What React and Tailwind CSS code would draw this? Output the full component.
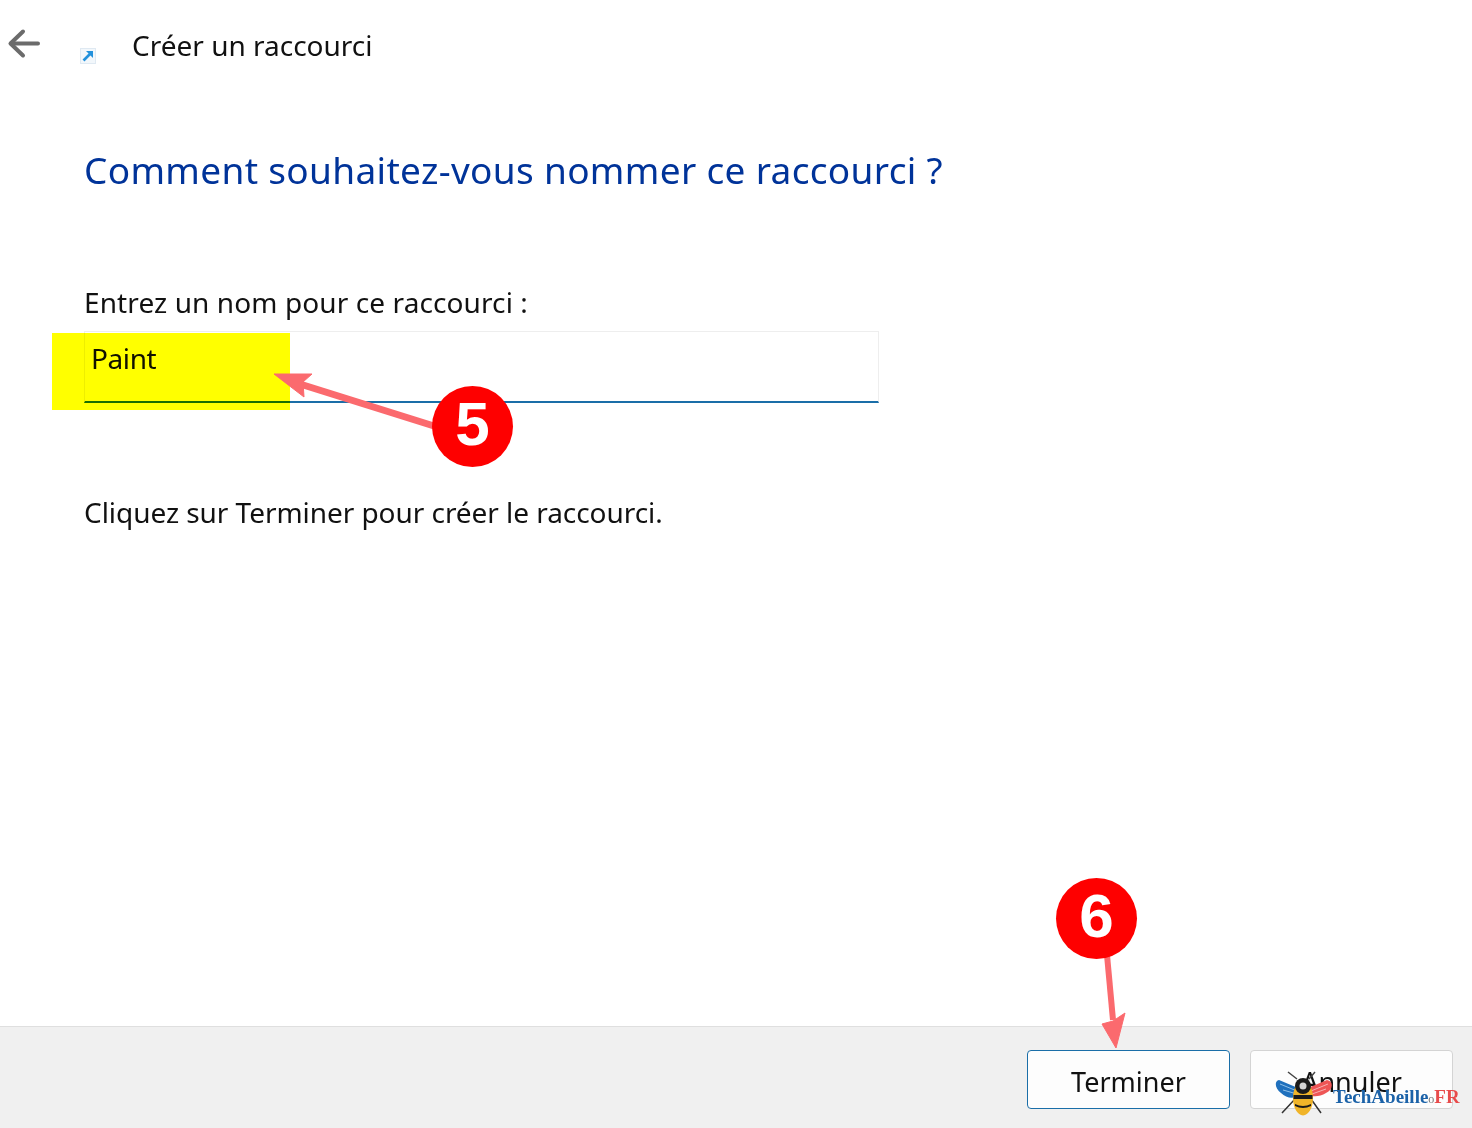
const uiFont = { fontFamily: '"Noto Sans", "Open Sans", sans-serif' };

function BackArrow() {
  return (
    <svg width="34" height="32" viewBox="0 0 34 32" fill="none" stroke="#6b6b6b" strokeWidth="4" strokeLinecap="round" strokeLinejoin="round">
      <path d="M31 15.500H4" />
      <path d="M16 3.500 3.500 15.500 16 27.500" />
    </svg>
  );
}

function ShortcutIcon() {
  return (
    <svg width="16" height="16" viewBox="0 0 16 16" fill="none">
      <rect x="0.500" y="0.500" width="15" height="15" fill="#f2f7fb" stroke="#dfe9f2" />
      <path d="M3.500 12.500 10.500 5.500" stroke="#2291dc" strokeWidth="2.600" />
      <path d="M6 3H13V10Z" fill="#2291dc" />
    </svg>
  );
}

function Badge({ number, className }) {
  return (
    <div
      className={`absolute flex h-[81px] w-[81px] items-center justify-center rounded-full bg-[#fe0000] pb-[5px] text-[62px] font-bold leading-none text-white ${className}`}
      style={{ fontFamily: '"Liberation Sans", Arial, sans-serif' }}
    >
      {number}
    </div>
  );
}

function Arrows() {
  return (
    <svg className="pointer-events-none absolute left-0 top-0" width="1472" height="1128" fill="none">
      <path d="M434 426 300 384" stroke="#fb6a6e" strokeWidth="7" />
      <path d="M274 374 312 374 303 382 304 397Z" fill="#fb6a6e" stroke="#fb6a6e" strokeWidth="1" strokeLinejoin="round" />
      <path d="M1107 955 1113 1020" stroke="#fb6a6e" strokeWidth="6" />
      <path d="M1116 1048 1102 1024 1113 1021 1125 1013Z" fill="#fb6a6e" stroke="#fb6a6e" strokeWidth="1" strokeLinejoin="round" />
    </svg>
  );
}

function Bee() {
  return (
    <svg width="58" height="45" viewBox="0 0 58 45" fill="none">
      <path d="M23 17 4 9C-1 10 0 18 6 22 11 27 18 28 23 25Z" fill="#1f70bd" />
      <path d="M5 13 22 20M8 19 22 23" stroke="#8fc0e8" strokeWidth="1" />
      <path d="M33 17 52 9C59 10 58 19 51 22 45 26 38 26 33 24Z" fill="#ee5555" />
      <path d="M36 20 53 13M37 23 51 18" stroke="#f6b0b0" strokeWidth="1" />
      <path d="M22 8 13 1M34 8 40 1" stroke="#444" strokeWidth="1.500" />
      <path d="M20 28 7 42M36 28 46 42" stroke="#333" strokeWidth="1.500" />
      <ellipse cx="28" cy="27" rx="10" ry="17.500" fill="#f0b429" />
      <path d="M18.500 24H37.500V28H18.500ZM20 33Q28 37 36 33V35Q28 39 20 35Z" fill="#1b1b1b" />
      <circle cx="28" cy="15" r="8" fill="#1b1b1b" />
      <circle cx="28" cy="15" r="3.500" fill="#d4d4d4" />
    </svg>
  );
}

function Watermark() {
  return (
    <div className="absolute left-[1275px] top-[1071px] flex items-start">
      <Bee />
      <div
        className="mt-[14px] text-[19px] font-bold leading-[24px] text-[#1b62a8]"
        style={{ fontFamily: '"Liberation Serif", serif' }}
      >
        TechAbeille<span className="text-[12px] font-normal text-[#777]">o</span><span className="text-[#e84b4b]">FR</span>
      </div>
    </div>
  );
}

function FooterButton({ label, primary }) {
  return (
    <button
      className={`h-[59px] w-[203px] rounded-[4px] border bg-[#fdfdfd] pt-[5px] text-[27px] text-[#111] ${
        primary ? 'border-[#1a6ea8]' : 'border-[#d4d4d4]'
      }`}
    >
      {label}
    </button>
  );
}

export default function App() {
  return (
    <div className="relative flex h-[1128px] w-[1472px] flex-col overflow-hidden bg-white" style={uiFont}>
      <main className="flex-1">
        <header className="flex h-[92px] items-start">
          <div className="ml-[7px] mt-[28px]">
            <BackArrow />
          </div>
          <div className="ml-[39px] mt-[48px]">
            <ShortcutIcon />
          </div>
          <h1 className="ml-[36px] mt-[26px] text-[28px] leading-[38px] text-[#111]">Créer un raccourci</h1>
        </header>

        <div className="px-[84px]">
          <h2 className="mt-[52px] text-[37px] leading-[52px] tracking-[0.33px] text-[#003399]">
            Comment souhaitez-vous nommer ce raccourci ?
          </h2>
          <p className="mt-[87px] text-[28px] leading-[38px] tracking-[0.1px] text-[#111]">Entrez un nom pour ce raccourci :</p>
          <div className="mt-[10px] flex h-[72px] w-[795px] items-start border border-b-2 border-[#eeeeee] border-b-[#1a6ea8] pl-[6px]">
            <span className="mt-[7px] text-[28px] leading-[38px] tracking-[-0.4px] text-[#111]">Paint</span>
          </div>
          <p className="mt-[90px] text-[28px] leading-[38px] tracking-[-0.05px] text-[#111]">Cliquez sur Terminer pour créer le raccourci.</p>
        </div>
      </main>

      <footer className="flex h-[102px] items-start justify-end gap-[20px] border-t border-[#dfdfdf] bg-[#f0f0f0] pr-[19px] pt-[23px]">
        <FooterButton label="Terminer" primary />
        <FooterButton label="Annuler" />
      </footer>

      {/* yellow highlight sits over the field, text stays readable */}
      <div className="absolute left-[52px] top-[333px] h-[77px] w-[238px] bg-[#ffff00] mix-blend-multiply" />
      <Arrows />
      <Badge number="5" className="left-[432px] top-[386px]" />
      <Badge number="6" className="left-[1056px] top-[878px]" />
      <Watermark />
    </div>
  );
}
